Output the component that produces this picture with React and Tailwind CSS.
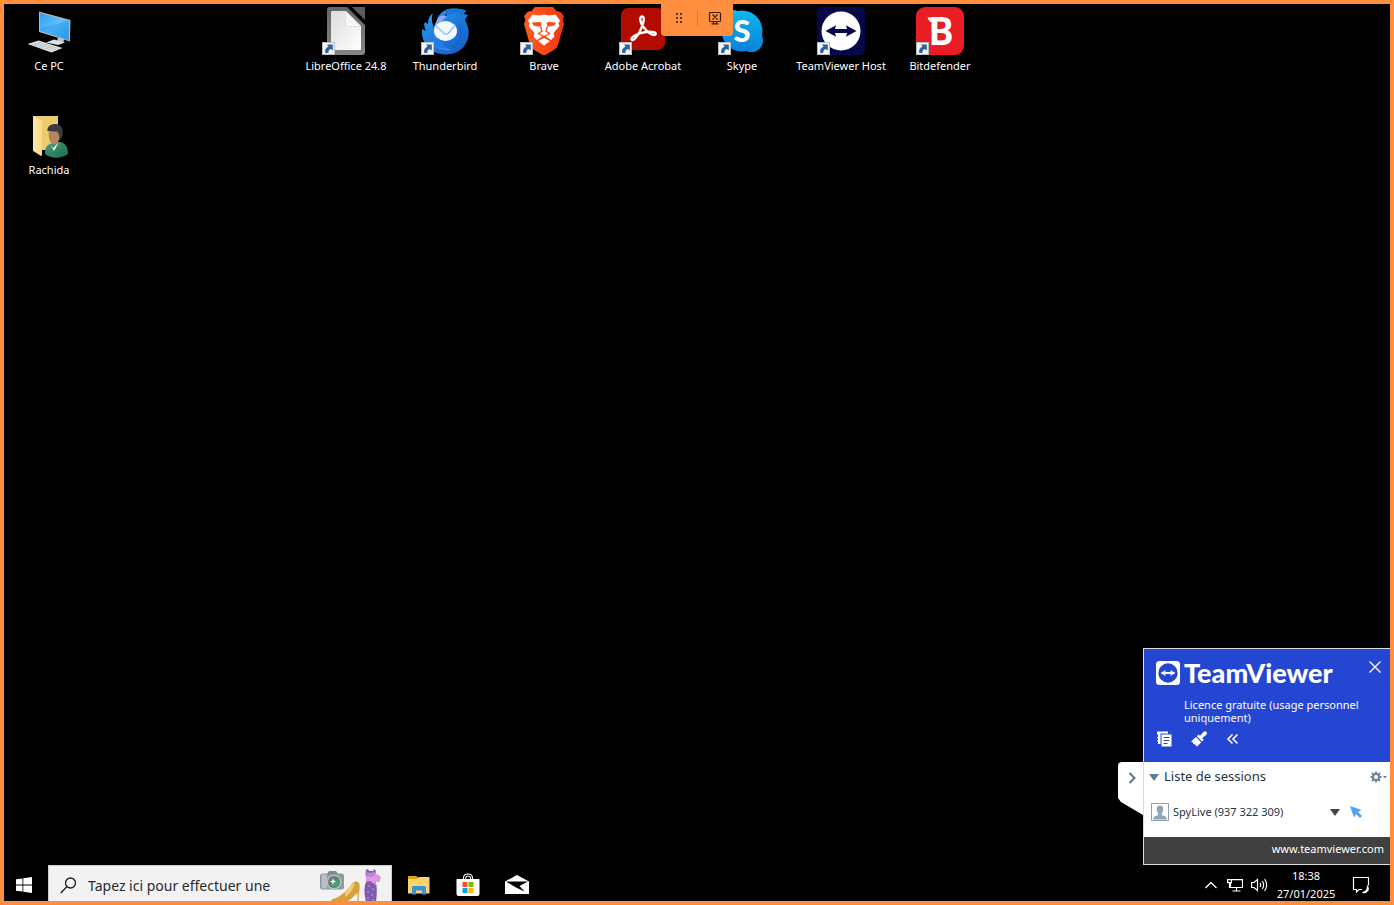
import React from "react";

const Shortcut = () => (
  <g>
    <rect x="0.5" y="35.5" width="12" height="12" fill="#f4f4f4" stroke="#b9bcc0" />
    <path d="M3.2 46 C2.8 42.5 4 40.3 6.6 39.8 L5 37.6 L10.8 37.6 L10.8 43.6 L8.8 42 C7 42.6 6.2 43.8 6.4 46Z" fill="#2f5f9f" />
  </g>
);

const Glyph = ({ children }) => (
  <svg viewBox="0 0 48 48" className="size-12 shrink-0" aria-hidden="true">
    {children}
  </svg>
);

const PcIcon = () => (
  <Glyph>
    <defs>
      <linearGradient id="pcs" x1="0" y1="0" x2="1" y2="1">
        <stop offset="0" stopColor="#2f9df0" />
        <stop offset=".5" stopColor="#5fc0fb" />
        <stop offset="1" stopColor="#2b9bf0" />
      </linearGradient>
    </defs>
    <path d="M14 4.500 L45.500 13 L45 34.500 L14 25Z" fill="#aab4bc" />
    <path d="M15 6 L44 14 L43.500 33 L15 23.800Z" fill="url(#pcs)" />
    <path d="M15 21 L44 14 L43.500 33 L15 23.800Z" fill="#1e8be8" opacity=".35" />
    <path d="M33 30 L39 32 L38.500 36 L32 34.500Z" fill="#b9c2c9" />
    <path d="M21 35.500 L29 32.500 L40 35.500 L33 38Z" fill="#dbe1e6" />
    <path d="M2.500 37 L13.500 33.500 L37.500 41 L26.500 45.500Z" fill="#dfe3e7" />
    <path d="M6 37 L28 44 M9 36 L31 42.8 M12 34.8 L34 41.8 M8 38.5 L17 35 M14 40.2 L23 36.8 M20 42 L29 38.6" stroke="#a9b0b6" strokeWidth=".5" />
  </Glyph>
);

const UserFolderIcon = () => (
  <Glyph>
    <defs>
      <linearGradient id="fold" x1="0" y1="0" x2="1" y2="0">
        <stop offset="0" stopColor="#ffe9a6" />
        <stop offset="1" stopColor="#f8d98a" />
      </linearGradient>
      <linearGradient id="coat" x1="0" y1="0" x2="1" y2="1">
        <stop offset="0" stopColor="#4a9c7b" />
        <stop offset="1" stopColor="#1c6b4c" />
      </linearGradient>
    </defs>
    <path d="M8 5 H33 V39 H17 L16 45 L8 40Z" fill="#eccb6f" />
    <path d="M8 5 L17 9.500 V45 L8 39Z" fill="url(#fold)" />
    <path d="M20 43 C20 35 23 33 28 32 L35 31 C41 32 43 37 43 43 C36 48 26 48 20 43Z" fill="url(#coat)" />
    <path d="M25 33 L28 37 L34 31 L29 40Z" fill="#f1f5f3" />
    <path d="M24 18 C22.500 26 25 33 29 33.500 C33 33 36 27 36 20Z" fill="#b48563" />
    <path d="M22.500 20 C22 14 27 13 31 13 C38 13.500 39 21 36.500 27 L34.500 30 C34.500 25 34 22 32 20.500 C28 21 25 19.500 22.500 20Z" fill="#3b3b3b" />
  </Glyph>
);

const LibreIcon = () => (
  <Glyph>
    <defs>
      <linearGradient id="lib" x1="0" y1="0" x2="0" y2="1">
        <stop offset="0" stopColor="#666" />
        <stop offset="1" stopColor="#858585" />
      </linearGradient>
      <linearGradient id="page" x1="0" y1="0" x2="1" y2="1">
        <stop offset="0" stopColor="#dcdcdc" />
        <stop offset="1" stopColor="#ffffff" />
      </linearGradient>
    </defs>
    <path d="M8 0 H25 L43 18 V45 Q43 48 40 48 H8 Q5 48 5 45 V3 Q5 0 8 0Z" fill="url(#lib)" />
    <path d="M30 0 H43 V13Z" fill="#5c5c5c" />
    <path d="M10 4 H24 L39 19 V42 Q39 43 38 43 H10 Q9 43 9 42 V5 Q9 4 10 4Z" fill="url(#page)" />
    <path d="M23.5 4 L39 19.5 H25 Q23.500 19.500 23.500 18Z" fill="#f7f7f7" stroke="#cfcfcf" strokeWidth=".5" />
    <Shortcut />
  </Glyph>
);

const ThunderbirdIcon = () => (
  <Glyph>
    <defs>
      <linearGradient id="tb" x1="0" y1="0" x2="1" y2="1">
        <stop offset="0" stopColor="#2a9df4" />
        <stop offset="1" stopColor="#1259c3" />
      </linearGradient>
    </defs>
    <path d="M12 6 C8 9 7 13 7 17 L4 15 C2 18 4 21 5 24 L1 22 C0 38 11 47.500 25 47.500 C40 47.500 49 36 47.500 23 C47 18 45 15 44 13 L47 8 L43 7 L45 3.500 C39 1.500 31 1 25 3 C20 5 17 9 16 13 L13 21 C11 15 10 11 12 6Z" fill="url(#tb)" />
    <path d="M16 13 C18 8 22 8 26 9 L20 15 C16 19 14 22 14 27 L13 20Z" fill="#91a4f5" />
    <path d="M24 3 C29 1 37 1 45 3.500 L42 7 C37 5 31 6 28 8 C26 6 24 5 24 3Z" fill="#1477dc" />
    <circle cx="25" cy="8" r="1.100" fill="#06224f" />
    <ellipse cx="24.500" cy="24" rx="11.500" ry="10" fill="#f1f8ff" />
    <path d="M15 19 L23 26.500 Q25 28 27 26.500 L34.500 18" fill="none" stroke="#86bdec" strokeWidth="1.200" />
    <path d="M5 29 C9 33 14 33 18 33 C20 38 25 42 31 43 C22 45 8 39 5 29Z" fill="#7d86e6" opacity=".8" />
    <path d="M5 27 C9 32 13 32 17 31.500 C20 33 21 38 27 42 C17 43 7 36 5 27Z" fill="#207fe4" />
    <path d="M37 15 C42 25 39 35 33 41" fill="none" stroke="#1153b9" strokeWidth="1" opacity=".6" />
    <Shortcut />
  </Glyph>
);

const BraveIcon = () => (
  <Glyph>
    <defs>
      <linearGradient id="brv" x1="0" y1="0" x2="1" y2="0">
        <stop offset="0" stopColor="#ff5a1f" />
        <stop offset=".5" stopColor="#ff4a17" />
        <stop offset="1" stopColor="#e8380f" />
      </linearGradient>
    </defs>
    <path d="M15 0 H33 L37 4.500 C39 4 41 5 42 7 L44 9 L42.500 13 L44 17 L38 38 C37 41 35 42 33 43.500 L26 47.500 Q24 49 22 47.500 L15 43.500 C13 42 11 41 10 38 L4 17 L5.500 13 L4 9 L6 7 C7 5 9 4 11 4.500Z" fill="url(#brv)" />
    <path d="M12.500 7.500 L19 8.500 L24 7.500 L29 8.500 L35.500 7.500 L40 13.500 L38.500 16.500 L39.500 19 L33.500 26 L34.500 29.500 L31 33 L25.500 29 L24 28 L22.500 29 L17 33 L13.500 29.500 L14.500 26 L8.500 19 L9.500 16.500 L8 13.500Z" fill="#fff" />
    <path d="M18 34 L24 31 L30 34 L24 38.500Z" fill="#fff" />
    <path d="M12 15.500 L19 15 L21.500 16 L20.500 19 L18 19.500 L13.500 18.500Z M36 15.500 L29 15 L26.500 16 L27.500 19 L30 19.500 L34.500 18.500Z" fill="#ff4a17" />
    <path d="M20.500 19 L22 24 L18.500 26.500 L24 30 L29.500 26.500 L26 24 L27.500 19" fill="none" stroke="#ff4a17" strokeWidth="1.300" />
    <Shortcut />
  </Glyph>
);

const AcrobatIcon = () => (
  <Glyph>
    <rect x="2" y="1" width="44" height="42" rx="7" fill="#b30b00" />
    <path d="M23 9.500 C20 9.500 21 16 24.500 20 C28 25 34 29.500 36.500 27.500 C38 25.500 33 24 27 25 C20 26 11.500 29.500 12.500 32.500 C14 35 19 29 22 22 C25 15 26 9.500 23 9.500Z" fill="none" stroke="#fff" strokeWidth="2.400" strokeLinejoin="round" />
    <Shortcut />
  </Glyph>
);

const SkypeIcon = () => (
  <Glyph>
    <defs>
      <linearGradient id="sky" x1="0" y1="0" x2="0" y2="1">
        <stop offset="0" stopColor="#0bb9f0" />
        <stop offset="1" stopColor="#0c7fdb" />
      </linearGradient>
    </defs>
    <circle cx="15" cy="15" r="12" fill="#17b9ec" />
    <circle cx="33.500" cy="33.500" r="11.500" fill="#0f8ade" />
    <circle cx="24" cy="24" r="20.500" fill="url(#sky)" />
    <text x="24" y="35" textAnchor="middle" fontSize="31" fontWeight="900" fill="#fff" className="font-[Lato,sans-serif]">S</text>
    <Shortcut />
  </Glyph>
);

const TeamViewerIcon = () => (
  <Glyph>
    <rect width="48" height="48" rx="5" fill="#050749" />
    <circle cx="24" cy="24" r="19.500" fill="#fff" />
    <path d="M8.500 24 L19 18.200 L18 22 H30 L29 18.200 L39.500 24 L29 29.800 L30 26 H18 L19 29.800Z" fill="#050749" />
    <Shortcut />
  </Glyph>
);

const BitdefenderIcon = () => (
  <Glyph>
    <rect width="48" height="48" rx="9" fill="#ea1d25" />
    <path d="M11.500 10.500 H19 V15 H15.500 C13.500 15 12.500 13 11.500 10.500Z" fill="#fff" />
    <text x="25.500" y="38" textAnchor="middle" fontSize="38" fontWeight="700" fill="#fff" className="font-[Roboto,sans-serif]">B</text>
    <Shortcut />
  </Glyph>
);

const shortcuts = [
  { name: "Ce PC", Icon: PcIcon, place: "col-start-1 row-start-1" },
  { name: "Rachida", Icon: UserFolderIcon, place: "col-start-1 row-start-2" },
  { name: "LibreOffice 24.8", Icon: LibreIcon, place: "col-start-4 row-start-1" },
  { name: "Thunderbird", Icon: ThunderbirdIcon, place: "col-start-5 row-start-1" },
  { name: "Brave", Icon: BraveIcon, place: "col-start-6 row-start-1" },
  { name: "Adobe Acrobat", Icon: AcrobatIcon, place: "col-start-7 row-start-1" },
  { name: "Skype", Icon: SkypeIcon, place: "col-start-8 row-start-1" },
  { name: "TeamViewer Host", Icon: TeamViewerIcon, place: "col-start-9 row-start-1" },
  { name: "Bitdefender", Icon: BitdefenderIcon, place: "col-start-10 row-start-1" },
];

function Desktop() {
  return (
    <div className="grid grid-cols-[repeat(10,90px)] grid-rows-[72px_72px] gap-x-[9px] gap-y-8 pt-[3px]">
      {shortcuts.map(({ name, Icon, place }) => (
        <button key={name} type="button" className={`${place} flex flex-col items-center gap-[3px] text-[11px] leading-4 whitespace-nowrap text-white`}>
          <Icon />
          <span>{name}</span>
        </button>
      ))}
    </div>
  );
}

function ConnectionBar() {
  return (
    <div className="absolute top-0 left-1/2 flex h-8 w-[72px] -translate-x-1/2 items-center rounded-b bg-[#ff8f3f]">
      <button type="button" aria-label="Déplacer" className="flex flex-1 justify-center pb-1">
        <svg viewBox="0 0 8 12" className="h-3 w-2" fill="#5c3010" aria-hidden="true">
          {[1, 5, 9].map((y) => (
            <g key={y}>
              <rect x="1" y={y} width="2" height="2" />
              <rect x="5" y={y} width="2" height="2" />
            </g>
          ))}
        </svg>
      </button>
      <span className="mb-1 h-4 w-px bg-[#d97833]" />
      <button type="button" aria-label="Fermer la session" className="flex flex-1 justify-center pb-1">
        <svg viewBox="0 0 14 14" className="size-3.5" fill="none" stroke="#3a1d08" strokeWidth="1.200" aria-hidden="true">
          <rect x="1.500" y="1.500" width="11" height="9" rx="1" />
          <path d="M4.500 3.500 L9.500 8.500 M9.500 3.500 L4.500 8.500 M3.500 12.800 H10.500 M5.500 10.500 V12.800 M8.500 10.500 V12.800" />
        </svg>
      </button>
    </div>
  );
}

function SessionPanel() {
  return (
    <section aria-label="TeamViewer" className="absolute right-0 bottom-0 flex items-start">
      <button
        type="button"
        aria-label="Replier le panneau"
        className="mt-[114px] flex h-[53px] w-[25px] justify-center rounded-tl bg-white pt-2.5 pl-0.5 [clip-path:polygon(0_0,100%_0,100%_100%,3px_40px,0_36px)]"
      >
        <svg viewBox="0 0 8 12" className="h-3 w-2" fill="none" stroke="#5f7388" strokeWidth="2" aria-hidden="true">
          <path d="M1.500 1 L6.500 6 L1.500 11" />
        </svg>
      </button>
      <div className="w-[247px] border-y border-l border-[#dcdcdc] bg-white">
        <header className="h-[113px] bg-[#2546d2] pt-3 pl-3 text-white">
          <div className="flex h-6 items-center gap-1">
            <svg viewBox="0 0 24 24" className="size-6" aria-hidden="true">
              <rect width="24" height="24" rx="3.500" fill="#fff" />
              <circle cx="12" cy="12" r="9.700" fill="#2546d2" />
              <path d="M4.500 12 L9.800 9 L9.200 11 H14.800 L14.200 9 L19.500 12 L14.200 15 L14.800 13 H9.200 L9.800 15Z" fill="#fff" />
            </svg>
            <h1 className="font-[Lato,sans-serif] text-[27px] leading-6 font-black">TeamViewer</h1>
            <button type="button" aria-label="Fermer" className="mr-2 mb-3 ml-auto">
              <svg viewBox="0 0 14 14" className="size-3.5" stroke="#fff" strokeWidth="1.300" aria-hidden="true">
                <path d="M1.500 1.500 L12.500 12.500 M12.500 1.500 L1.500 12.500" />
              </svg>
            </button>
          </div>
          <p className="mt-[13px] ml-7 w-[190px] text-[11px] leading-[13px]">Licence gratuite (usage personnel uniquement)</p>
          <div className="mt-[7px] ml-px flex gap-[18px]">
            <button type="button" aria-label="Copier">
              <svg viewBox="0 0 16 16" className="size-4" aria-hidden="true">
                <path d="M0 .500 H11 V3 H4.500 V13 H1 V10.500 H0 V9.500 H1 V7 H0 V6 H1 V3.500 H0Z" fill="#fff" />
                <path d="M3.500 2.500 H15 V16 H3.500Z" fill="#2546d2" />
                <path d="M4.500 3.500 H14.500 V15.500 H4.500Z" fill="#fff" />
                <path d="M6.500 6.500 H12.500 M6.500 9.500 H12.500 M6.500 12.500 H10.500" stroke="#2546d2" strokeWidth="1.200" />
              </svg>
            </button>
            <button type="button" aria-label="Effacer">
              <svg viewBox="0 0 16 16" className="size-4" aria-hidden="true">
                <path d="M15.500 1 Q14 -.500 12.500 1 L9 4.800 L7.500 3.500 L5.800 5.200 L11 10.500 L12.700 8.800 L11.200 7.200 L15.300 3.700 Q16.500 2.300 15.500 1Z" fill="#fff" />
                <path d="M5 6 L10.200 11.200 L6 15.700 L5 14 L4 14.500 L3.500 12.800 L2 13 L2 11.500 L0 10.500Z" fill="#fff" />
              </svg>
            </button>
            <button type="button" aria-label="Réduire">
              <svg viewBox="0 0 16 16" className="size-4" fill="none" stroke="#fff" strokeWidth="1.600" aria-hidden="true">
                <path d="M7.500 3.500 L3 8 L7.500 12.500 M12.500 3.500 L8 8 L12.500 12.500" />
              </svg>
            </button>
          </div>
        </header>
        <div className="flex h-[75px] flex-col text-[#26333f]">
          <div className="flex h-[30px] items-center pl-[5px]">
            <button type="button" className="flex items-center gap-[5px] text-[13px]">
              <svg viewBox="0 0 10 7" className="h-[7px] w-2.5" aria-hidden="true">
                <path d="M0 0 H10 L5 7Z" fill="#5f7d98" />
              </svg>
              Liste de sessions
            </button>
            <button type="button" aria-label="Options" className="mr-[3px] ml-auto flex items-center gap-px">
              <svg viewBox="0 0 12 12" className="size-3" fill="none" stroke="#6b8299" aria-hidden="true">
                <circle cx="6" cy="6" r="3" strokeWidth="2" />
                <path d="M6 .500 V2.500 M6 9.500 V11.500 M.500 6 H2.500 M9.500 6 H11.500 M2 2 L3.500 3.500 M8.500 8.500 L10 10 M10 2 L8.500 3.500 M3.500 8.500 L2 10" strokeWidth="1.800" />
              </svg>
              <svg viewBox="0 0 4 3" className="h-[3px] w-1" aria-hidden="true">
                <path d="M0 0 H4 L2 2.500Z" fill="#6b8299" />
              </svg>
            </button>
          </div>
          <div className="flex h-10 items-center pl-[7px] text-[11px]">
            <svg viewBox="0 0 18 18" className="size-[18px]" aria-hidden="true">
              <rect x=".5" y=".5" width="17" height="17" fill="#fff" stroke="#8fa3b5" />
              <path d="M9 2.500 C11.500 2.500 12.500 4 12.300 6.500 C12.200 8.500 11.500 9.500 10.800 10.500 V12 C13 13 15.500 13 16 16.500 H2 C2.500 13 5 13 7.200 12 V10.500 C6.500 9.500 5.800 8.500 5.700 6.500 C5.500 4 6.500 2.500 9 2.500Z" fill="#93a6b7" />
            </svg>
            <span className="ml-1">SpyLive (937 322 309)</span>
            <button type="button" aria-label="Menu de la session" className="ml-auto">
              <svg viewBox="0 0 10 7" className="h-[7px] w-2.5" aria-hidden="true">
                <path d="M0 0 H10 L5 7Z" fill="#444" />
              </svg>
            </button>
            <button type="button" aria-label="Contrôle à distance" className="mr-7 ml-2.5">
              <svg viewBox="0 0 12 12" className="size-3" aria-hidden="true">
                <path d="M0 0 L11.500 4 L8 6 L12 10 L10 12 L6 8 L4 11.500Z" fill="#4aa3f5" />
              </svg>
            </button>
          </div>
        </div>
        <footer className="flex h-[27px] items-center justify-end bg-[#404040] pr-1.5 pb-0.5 text-[11px]">
          <a href="#teamviewer" className="text-white">www.teamviewer.com</a>
        </footer>
      </div>
    </section>
  );
}

function SearchArt() {
  return (
    <svg viewBox="0 0 68 36" className="mr-1 h-9 w-[68px] shrink-0" aria-hidden="true">
      <rect x="1" y="7.500" width="24" height="16" rx="2.500" fill="#8d989f" />
      <path d="M8 8 L10 5 H17 L19 8Z" fill="#7d8890" />
      <rect x="2.500" y="8.500" width="5.500" height="14" rx="1.500" fill="#b7c0c7" />
      <circle cx="15" cy="16" r="7.500" fill="#b3bdc3" />
      <circle cx="15" cy="16" r="6" fill="#5f7d74" />
      <circle cx="16" cy="17.500" r="4" fill="#4c9b76" />
      <path d="M14 12 L14.800 14.700 L17.500 15.500 L14.800 16.300 L14 19 L13.200 16.300 L10.500 15.500 L13.200 14.700Z" fill="#fff" />
      <path d="M12 35 C12 33 15 33 19 31 C26 27 30 22 33 18 C35 15 38 15 40 17 C41 20 41 23 40 26 L39.500 36 H38.300 L38.500 27 C34 30 31 36 25 36 H12Z" fill="#d9a13b" />
      <path d="M26 27 C30 22 33 18 36 16.500 C35 21 33 26 26 31Z" fill="#f1cd78" />
      <path d="M47 4 L48.500 3 L50.500 5 L54 5 L55.500 3 L57 5 C56 9 56 11 56 14 C58.500 20 58 28 57 36 H47 C45 28 44.500 20 48 14 C47 11 46 8 47 4Z" fill="#7f5bb0" />
      <path d="M47 5 L50.500 7 L54 6 L56.500 5 L55.500 14 L48.500 14Z" fill="#b884d8" />
      <path d="M47 10 L53 11 L58 8 L62 11 L60.500 16 L56 15.500 L58 20 L51 15 L47 16Z" fill="#dd96df" />
      <g fill="#cdb6ea">
        <circle cx="50" cy="20" r=".7" /><circle cx="54" cy="23" r=".7" /><circle cx="49" cy="26" r=".7" />
        <circle cx="53" cy="29" r=".7" /><circle cx="49" cy="32" r=".7" /><circle cx="54" cy="34" r=".7" />
      </g>
    </svg>
  );
}

function Taskbar() {
  return (
    <nav aria-label="Barre des tâches" className="flex h-9 items-center overflow-hidden text-white">
      <button type="button" aria-label="Démarrer" className="flex w-11 justify-center pt-1 pr-1">
        <svg viewBox="0 0 16 16" className="size-4" fill="#fff" aria-hidden="true">
          <path d="M0 2.300 L6.500 1.400 V7.600 H0Z M7.300 1.300 L16 0 V7.600 H7.300Z M0 8.400 H6.500 V14.600 L0 13.700Z M7.300 8.400 H16 V16 L7.300 14.700Z" />
        </svg>
      </button>
      <label className="flex h-full w-[344px] items-center border border-b-0 border-[#cfcfcf] bg-[#f2f2f2] pl-[11px]">
        <svg viewBox="0 0 17 17" className="mt-1 size-[17px] shrink-0" fill="none" stroke="#1d1d1d" strokeWidth="1.300" aria-hidden="true">
          <circle cx="10.500" cy="6" r="5" />
          <path d="M7 9.500 L.800 16" />
        </svg>
        <input
          type="text"
          aria-label="Rechercher"
          placeholder="Tapez ici pour effectuer une"
          className="mt-1 ml-[11px] min-w-0 flex-1 bg-transparent text-sm text-[#2b2b2b] outline-none placeholder:text-[#2b2b2b]"
        />
        <SearchArt />
      </label>
      <div className="ml-4 flex items-center gap-[25px] pt-1">
        <button type="button" aria-label="Explorateur de fichiers">
          <svg viewBox="0 0 24 24" className="size-6" aria-hidden="true">
            <path d="M0 3 H8.500 L10 4.500 V8 H0Z" fill="#e0a21d" />
            <path d="M0 6 H9 L10.500 4 H21.500 V20.500 H0Z" fill="#fbd36b" />
            <path d="M4 21.500 V14.500 Q4 13 5.500 13 H16.500 Q18 13 18 14.500 V21.500 H14 V17.500 H8 V21.500Z" fill="#3b93d8" />
          </svg>
        </button>
        <button type="button" aria-label="Microsoft Store" className="-ml-px">
          <svg viewBox="0 0 24 24" className="size-6" aria-hidden="true">
            <path d="M7.500 7 V5 Q7.500 1 12 1 Q16.500 1 16.500 5 V7 M9.800 7 V5 Q9.800 3 12 3 Q14.500 3 14.500 5 V7" fill="none" stroke="#fff" strokeWidth="1.100" />
            <path d="M.500 6 H23.500 V21 Q23.500 23 21.500 23 H2.500 Q.500 23 .500 21Z" fill="#fff" />
            <path d="M6.500 9 H11.500 V14 H6.500Z" fill="#f25022" />
            <path d="M12.500 9 H17.500 V14 H12.500Z" fill="#7fba00" />
            <path d="M6.500 15 H11.500 V20 H6.500Z" fill="#00a4ef" />
            <path d="M12.500 15 H17.500 V20 H12.500Z" fill="#ffb900" />
          </svg>
        </button>
        <button type="button" aria-label="Courrier">
          <svg viewBox="0 0 24 24" className="size-6" aria-hidden="true">
            <path d="M0 8.500 L12 2 L24 8.500 V21 H0Z" fill="#fff" />
            <path d="M1 8.500 H23 L14.500 13 L19.500 18.500 L11 14.500Z" fill="#000" />
          </svg>
        </button>
      </div>
      <div className="mr-5 ml-auto flex items-center">
        <button type="button" aria-label="Icônes cachées" className="mt-1">
          <svg viewBox="0 0 12 8" className="h-2 w-3" fill="none" stroke="#fff" strokeWidth="1.300" aria-hidden="true">
            <path d="M.500 7 L6 1.500 L11.500 7" />
          </svg>
        </button>
        <button type="button" aria-label="Réseau" className="mt-1 ml-2.5">
          <svg viewBox="0 0 16 16" className="size-4" fill="none" stroke="#fff" strokeWidth="1.200" aria-hidden="true">
            <path d="M4.500 2.600 H15.500 V10.500 H3.500 V6 M9.500 10.500 V13.500 M5.500 14 H13.500" />
            <path d="M.600 2.600 H4.400 V5.600 H.600Z M2.500 5.600 V11" />
          </svg>
        </button>
        <button type="button" aria-label="Volume" className="mt-1 ml-2">
          <svg viewBox="0 0 17 16" className="h-4 w-[17px]" fill="none" stroke="#fff" strokeWidth="1.200" aria-hidden="true">
            <path d="M.600 5.500 H3 L6.500 2.500 V13.500 L3 10.500 H.600Z M9 6 Q10.300 8 9 10 M11.300 4 Q14 8 11.300 12 M13.600 2 Q17.700 8 13.600 14" />
          </svg>
        </button>
        <div className="mt-1 ml-2 flex w-[60px] flex-col items-center text-[11px] leading-[18px]">
          <time>18:38</time>
          <time>27/01/2025</time>
        </div>
        <button type="button" aria-label="Notifications" className="mt-1 ml-4">
          <svg viewBox="0 0 18 18" className="size-[18px]" fill="none" stroke="#fff" strokeWidth="1.200" aria-hidden="true">
            <path d="M10 13.500 H7 L4.500 16 V13.500 H1.500 V1.500 H16.500 V9.500" />
            <path d="M15.500 10.500 C17.500 13.500 15 17.500 10.500 16.500 C13.500 16 15.500 14 15.500 10.500Z" fill="#fff" />
          </svg>
        </button>
      </div>
    </nav>
  );
}

export default function App() {
  return (
    <div className="flex h-screen flex-col overflow-hidden border-4 border-[#ff8f3f] bg-black font-['Noto_Sans','Open_Sans',sans-serif]">
      <main className="relative flex-1">
        <Desktop />
        <ConnectionBar />
        <SessionPanel />
      </main>
      <Taskbar />
    </div>
  );
}
